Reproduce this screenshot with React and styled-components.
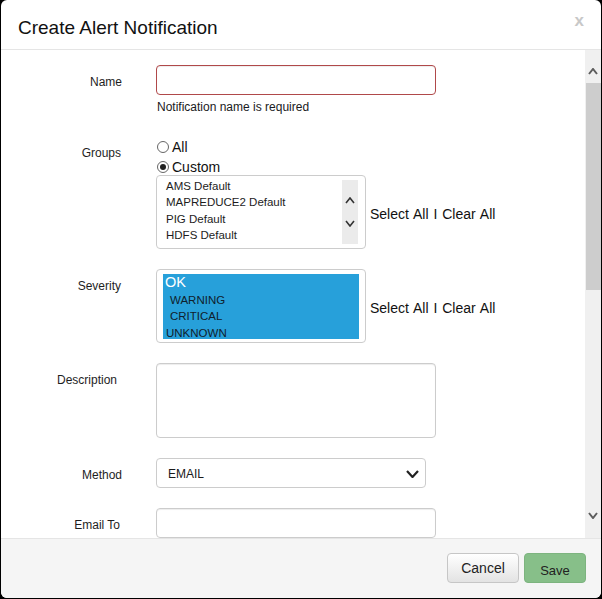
import React from 'react';
import styled, { createGlobalStyle } from 'styled-components';

const GlobalStyle = createGlobalStyle`
  html, body { margin: 0; padding: 0; background: #000; }
  body { font-family: "Liberation Sans", Arial, sans-serif; color: #333; }
  #root { width: 602px; height: 599px; }
  * { box-sizing: border-box; }
`;

const Modal = styled.div`
  margin-left: 1px;
  width: 600px;
  height: 598px;
  background: #fff;
  border-radius: 6px;
  display: flex;
  flex-direction: column;
  overflow: hidden;
`;

const Header = styled.div`
  flex: none;
  height: 50px;
  border-bottom: 1px solid #e5e5e5;
  display: flex;
  align-items: center;
  justify-content: space-between;
  padding: 6px 17px 0 17px;
`;

const Title = styled.h4`
  margin: 0;
  font-size: 19px;
  font-weight: normal;
  color: #111;
`;

const Close = styled.span`
  font-size: 17px;
  font-weight: bold;
  color: #c8c8c8;
  margin-top: -13px;
`;

const Body = styled.div`
  flex: 1;
  min-height: 0;
  display: flex;
`;

const Content = styled.div`
  flex: 1;
  overflow: hidden;
  padding-top: 15px;
`;

const Form = styled.div`
  display: flex;
  flex-direction: column;
  gap: 20px;
`;

const Row = styled.div`
  display: grid;
  grid-template-columns: 121px 1fr;
  column-gap: 34px;
  align-items: start;
`;

const Label = styled.label`
  text-align: right;
  font-size: 12px;
  line-height: 17px;
  padding-top: 9px;
  padding-right: ${p => p.$pr || 0}px;
  color: #1e1e1e;
`;

const TextInput = styled.input`
  display: block;
  width: ${p => p.$w || 280}px;
  height: 30px;
  margin: 0;
  border: 1px solid ${p => (p.$error ? '#b0494a' : '#ccc')};
  border-radius: 4px;
  box-shadow: inset 0 1px 1px rgba(0, 0, 0, 0.075);
  background: #fff;
  outline: none;
`;

const TextArea = styled.textarea`
  display: block;
  width: 280px;
  height: 75px;
  margin: 0;
  resize: none;
  border: 1px solid #ccc;
  border-radius: 4px;
  box-shadow: inset 0 1px 1px rgba(0, 0, 0, 0.075);
  outline: none;
`;

const Help = styled.div`
  font-size: 12px;
  line-height: 16px;
  padding-top: 4px;
  padding-bottom: 1px;
  padding-left: 1px;
  color: #1a1a22;
`;

const RadioGroup = styled.div`
  padding-top: 1px;
`;

const RadioLine = styled.div`
  display: flex;
  align-items: center;
  height: 20px;
  font-size: 14px;
  color: #111;
  gap: 3px;
  padding-left: 1px;
`;

const RadioCircle = styled.span`
  width: 12px;
  height: 12px;
  border-radius: 50%;
  border: 1px solid #666;
  background: #fff;
  display: flex;
  align-items: center;
  justify-content: center;
  &::after {
    content: '';
    width: 6px;
    height: 6px;
    border-radius: 50%;
    background: ${p => (p.$checked ? '#222' : 'transparent')};
  }
`;

const SideRow = styled.div`
  display: flex;
  align-items: center;
  gap: 4px;
  margin-top: ${p => p.$mt || 0}px;
`;

const ListBox = styled.div`
  width: 210px;
  height: 74px;
  border: 1px solid #ccc;
  border-radius: 4px;
  background: #fff;
  display: flex;
  padding: 2px 7px 2px 9px;
`;

const Items = styled.div`
  flex: 1;
  font-size: 11.5px;
  line-height: 16.3px;
  color: #1d1d1d;
`;

const MiniScroll = styled.div`
  width: 16px;
  height: 64px;
  margin-top: 2px;
  background: #ebebeb;
  display: flex;
  flex-direction: column;
  align-items: center;
  justify-content: center;
  gap: 16px;
`;

const SideText = styled.span`
  font-size: 14px;
  word-spacing: 1px;
  color: #111;
  padding-top: 3px;
`;

const SevBox = styled.div`
  width: 210px;
  height: 74px;
  border: 1px solid #ccc;
  border-radius: 4px;
  background: #fff;
  padding: 4px 6px 3px 6px;
`;

const SevList = styled.div`
  height: 100%;
  background: #27a0da;
  overflow: hidden;
`;

const SevItem = styled.div`
  padding-left: ${p => p.$indent}px;
  font-size: ${p => (p.$main ? '14.5px' : '11.5px')};
  line-height: ${p => (p.$main ? '17px' : '16.3px')};
  margin-bottom: ${p => (p.$main ? '1px' : '0')};
  color: ${p => (p.$main ? '#fff' : '#10202c')};
`;

const Select = styled.div`
  width: 270px;
  height: 30px;
  border: 1px solid #ccc;
  border-radius: 4px;
  display: flex;
  align-items: center;
  justify-content: space-between;
  padding: 2px 6px 0 11px;
  font-size: 12px;
  color: #1a1a1a;
`;

const ScrollTrack = styled.div`
  width: 16px;
  flex: none;
  background: #f0f0f0;
  display: flex;
  flex-direction: column;
`;

const ScrollBtn = styled.div`
  height: 33px;
  display: flex;
  justify-content: center;
  align-items: ${p => (p.$down ? 'flex-start' : 'flex-end')};
  padding: ${p => (p.$down ? '7px 0 0 0' : '0 0 8px 0')};
`;

const Thumb = styled.div`
  height: 207px;
  margin-left: 1px;
  background: #cdcdcd;
`;

const Spacer = styled.div`
  flex: 1;
`;

const Footer = styled.div`
  flex: none;
  height: 60px;
  border-top: 1px solid #e5e5e5;
  background: #f5f5f5;
  display: flex;
  justify-content: flex-end;
  align-items: flex-start;
  gap: 5px;
  padding: 14px 15px 0 0;
`;

const Button = styled.button`
  height: 30px;
  width: ${p => p.$w}px;
  border-radius: 4px;
  font-family: inherit;
  padding: ${p => (p.$primary ? '4px 0 0 0' : '0')};
  font-size: ${p => (p.$primary ? '13px' : '14px')};
  color: #222;
  border: 1px solid ${p => (p.$primary ? '#7db47f' : '#c6c6c6')};
  background: ${p =>
    p.$primary ? '#87bf89' : 'linear-gradient(#ffffff, #e3e3e3)'};
`;

const Chevron = ({ up, w = 9, h = 6, stroke = '#5e5e5e', sw = 2 }) => (
  <svg width={w} height={h} viewBox={`0 0 ${w} ${h}`}>
    <polyline
      points={
        up
          ? `1,${h - 1} ${w / 2},1 ${w - 1},${h - 1}`
          : `1,1 ${w / 2},${h - 1} ${w - 1},1`
      }
      fill="none"
      stroke={stroke}
      strokeWidth={sw}
    />
  </svg>
);

export default function App() {
  return (
    <>
      <GlobalStyle />
      <Modal>
        <Header>
          <Title>Create Alert Notification</Title>
          <Close>x</Close>
        </Header>
        <Body>
          <Content>
            <Form>
              <Row>
                <Label>Name</Label>
                <div>
                  <TextInput $error />
                  <Help>Notification name is required</Help>
                </div>
              </Row>
              <Row>
                <Label $pr={1}>Groups</Label>
                <RadioGroup>
                  <RadioLine>
                    <RadioCircle />
                    All
                  </RadioLine>
                  <RadioLine>
                    <RadioCircle $checked />
                    Custom
                  </RadioLine>
                  <SideRow $mt={-2}>
                    <ListBox>
                      <Items>
                        <div>AMS Default</div>
                        <div>MAPREDUCE2 Default</div>
                        <div>PIG Default</div>
                        <div>HDFS Default</div>
                      </Items>
                      <MiniScroll>
                        <Chevron up w={10} h={7} stroke="#333" sw={1.6} />
                        <Chevron w={10} h={7} stroke="#333" sw={1.6} />
                      </MiniScroll>
                    </ListBox>
                    <SideText>Select All I Clear All</SideText>
                  </SideRow>
                </RadioGroup>
              </Row>
              <Row>
                <Label $pr={1}>Severity</Label>
                <SideRow>
                  <SevBox>
                    <SevList>
                      <SevItem $main $indent={2}>OK</SevItem>
                      <SevItem $indent={7}>WARNING</SevItem>
                      <SevItem $indent={7}>CRITICAL</SevItem>
                      <SevItem $indent={3}>UNKNOWN</SevItem>
                    </SevList>
                  </SevBox>
                  <SideText>Select All I Clear All</SideText>
                </SideRow>
              </Row>
              <Row>
                <Label $pr={5}>Description</Label>
                <TextArea />
              </Row>
              <Row>
                <Label>Method</Label>
                <Select>
                  <span>EMAIL</span>
                  <Chevron w={13} h={8} stroke="#222" sw={2.2} />
                </Select>
              </Row>
              <Row>
                <Label $pr={2}>Email To</Label>
                <TextInput />
              </Row>
            </Form>
          </Content>
          <ScrollTrack>
            <ScrollBtn>
              <Chevron up w={10} h={7} />
            </ScrollBtn>
            <Thumb />
            <Spacer />
            <ScrollBtn $down>
              <Chevron w={10} h={7} />
            </ScrollBtn>
          </ScrollTrack>
        </Body>
        <Footer>
          <Button $w={72}>Cancel</Button>
          <Button $w={62} $primary>
            Save
          </Button>
        </Footer>
      </Modal>
    </>
  );
}
